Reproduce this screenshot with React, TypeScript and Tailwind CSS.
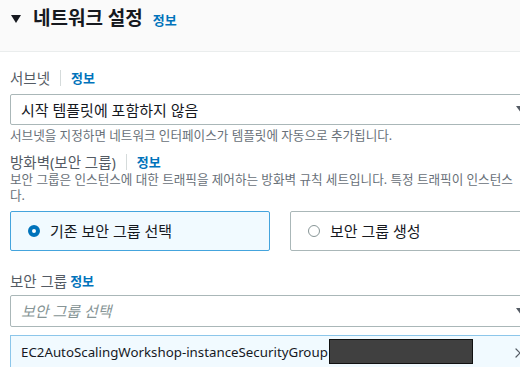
import { X } from "lucide-react";

function InfoLink({ className = "" }: { className?: string }) {
  return <span className={`text-[13px] font-bold text-[#0073bb] leading-[20px] ${className}`}>정보</span>;
}

function Caret() {
  return (
    <svg width="10" height="7" viewBox="0 0 10 7" className="shrink-0">
      <path d="M0 0 L10 0 L5 7 Z" fill="#545b64" />
    </svg>
  );
}

export default function App() {
  return (
    <div
      className="w-[520px] h-[367px] overflow-hidden bg-white text-[#16191f]"
      style={{ fontFamily: '"Noto Sans", "Noto Sans CJK KR", sans-serif' }}
    >
      <div className="w-[560px]">
        {/* header */}
        <div className="h-[52px] bg-[#fafafa] border-b border-[#eaeded] flex items-center pl-[11px] pb-[14px]">
          <svg width="10" height="8" viewBox="0 0 10 8" className="mr-[12px]">
            <path d="M0 0 L10 0 L5 8 Z" fill="#16191f" />
          </svg>
          <span className="text-[19px] font-bold leading-none">네트워크 설정</span>
          <InfoLink className="ml-[10px] mt-[3px] text-[11.5px]" />
        </div>

        <div className="pl-[10px]">
          {/* subnet */}
          <div className="mt-[16px] flex items-center h-[20px]">
            <span className="text-[14.5px] text-[#545b64] leading-[20px]">서브넷</span>
            <span className="w-px h-[16px] bg-[#d5dbdb] mx-[10px]" />
            <InfoLink />
          </div>
          <div className="mt-[6px] h-[31px] border border-[#aab7b8] rounded-[2px] flex items-center pl-[10px] pr-[33px] justify-between">
            <span className="text-[15px] leading-[20px]">시작 템플릿에 포함하지 않음</span>
            <Caret />
          </div>
          <div className="mt-[3px] text-[12.6px] leading-[16px] text-[#687078]">
            서브넷을 지정하면 네트워크 인터페이스가 템플릿에 자동으로 추가됩니다.
          </div>

          {/* firewall */}
          <div className="mt-[8px] flex items-center h-[20px]">
            <span className="text-[14.5px] text-[#545b64] leading-[20px]">방화벽(보안 그룹)</span>
            <span className="w-px h-[16px] bg-[#d5dbdb] mx-[10px]" />
            <InfoLink />
          </div>
          <div className="text-[12.6px] text-[#687078] leading-[16px] w-[510px] overflow-hidden whitespace-nowrap">
            보안 그룹은 인스턴스에 대한 트래픽을 제어하는 방화벽 규칙 세트입니다. 특정 트래픽이 인스턴스
            <br />
            다.
          </div>

          <div className="mt-[7px] flex gap-[20px]">
            <div className="w-[260px] h-[40px] rounded-[2px] border border-[#44a4dd] bg-[#f1faff] flex items-center pl-[17px]">
              <span className="w-[12px] h-[12px] rounded-full border-[4px] border-[#0073bb] bg-white mr-[10px]" />
              <span className="text-[15px] leading-[20px]">기존 보안 그룹 선택</span>
            </div>
            <div className="w-[260px] h-[40px] rounded-[2px] border border-[#aab7b8] bg-white flex items-center pl-[17px]">
              <span className="w-[12px] h-[12px] rounded-full border border-[#879596] bg-white mr-[10px]" />
              <span className="text-[15px] leading-[20px]">보안 그룹 생성</span>
            </div>
          </div>

          {/* security group */}
          <div className="mt-[20px] flex items-center h-[20px]">
            <span className="text-[14.5px] text-[#545b64] leading-[20px]">보안 그룹</span>
            <InfoLink className="ml-[3px]" />
          </div>
          <div className="mt-[4px] h-[32px] border border-[#aab7b8] rounded-[2px] flex items-center pl-[10px] pr-[33px] justify-between">
            <span className="text-[15px] italic text-[#879596] leading-[20px]">보안 그룹 선택</span>
            <Caret />
          </div>
          <div className="mt-[8px] h-[40px] border border-[#8cc6ea] bg-[#f1faff] flex items-start pt-[3px] pl-[10px] pr-[31px] justify-between">
            <div className="flex items-center">
              <span className="text-[13.3px] leading-[20px]">EC2AutoScalingWorkshop-instanceSecurityGroup</span>
              <span className="w-[144px] h-[25px] bg-[#404040] border border-[#111] ml-[1px]" />
            </div>
            <X size={16} strokeWidth={1.8} color="#545b64" className="mt-[6px]" />
          </div>
        </div>
      </div>
    </div>
  );
}
